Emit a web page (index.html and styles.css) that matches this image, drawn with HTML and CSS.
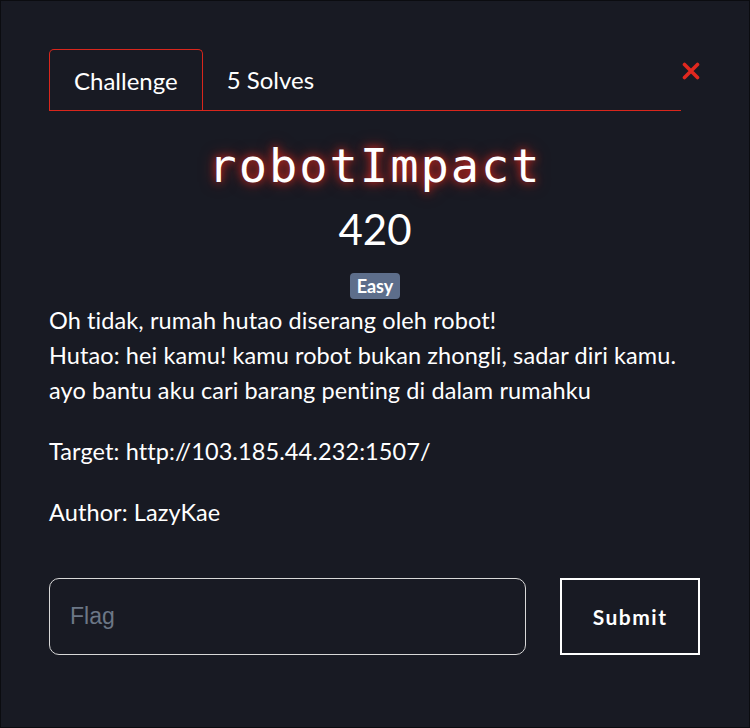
FILE: index.html
```html
<!DOCTYPE html>
<html>
<head>
<meta charset="utf-8">
<link rel="stylesheet" href="styles.css">
</head>
<body>
<div class="modal">
  <div class="tabs">
    <div class="tab active">Challenge</div>
    <div class="tab">5 Solves</div>
  </div>
  <button class="close" aria-label="Close">
    <svg width="18" height="18" viewBox="0 0 18 18"><path d="M2.5 2.5 L15.5 15.5 M15.5 2.5 L2.5 15.5" stroke="#e0281f" stroke-width="3.6" stroke-linecap="round"/></svg>
  </button>
  <h1 class="title">robotImpact</h1>
  <div class="points">420</div>
  <div class="badge-row"><span class="badge">Easy</span></div>
  <div class="desc">
    <p>Oh tidak, rumah hutao diserang oleh robot!<br>Hutao: hei kamu! kamu robot bukan zhongli, sadar diri kamu.<br>ayo bantu aku cari barang penting di dalam rumahku</p>
    <p>Target: http://103.185.44.232:1507/</p>
    <p>Author: LazyKae</p>
  </div>
  <form class="submit-row">
    <input class="flag" type="text" placeholder="Flag">
    <button class="submit" type="button">Submit</button>
  </form>
</div>
</body>
</html>
```
FILE: styles.css
```css
html, body {
  margin: 0;
  padding: 0;
  background: #0d0f14;
}
.modal {
  box-sizing: border-box;
  width: 750px;
  height: 728px;
  background: #181a23;
  border: 1px solid #0b0c10;
  position: relative;
  padding: 48px 49px 0 48px;
  font-family: Lato, "Open Sans", sans-serif;
  color: #ffffff;
}
.tabs {
  display: flex;
  width: 632px;
  border-bottom: 1px solid #d9261c;
  height: 61px;
}
.tab {
  font-size: 24px;
  line-height: 61px;
  padding: 0 24px;
  color: #ffffff;
}
.tab.active {
  border: 1px solid #d9261c;
  border-bottom: none;
  border-radius: 5px 5px 0 0;
  margin-bottom: -1px;
  height: 61px;
}
.close {
  position: absolute;
  top: 61px;
  left: 681px;
  background: none;
  border: none;
  padding: 0;
  width: 18px;
  height: 18px;
}
.close svg { display: block; }
.title {
  margin: 25px 0 0;
  text-align: center;
  font-family: "DejaVu Sans Mono", monospace;
  font-weight: 400;
  font-size: 47px;
  letter-spacing: 2px;
  line-height: 60px;
  text-shadow: 0 0 8px #d9261c, 0 0 16px rgba(217, 38, 28, 0.6);
  width: 652px;
}
.points {
  text-align: center;
  font-size: 42px;
  line-height: 50px;
  margin-top: 8px;
  width: 652px;
}
.badge-row {
  text-align: center;
  width: 652px;
  margin-top: 19px;
  height: 26px;
}
.badge {
  display: inline-block;
  background: #5d6e8b;
  color: #ffffff;
  font-weight: 700;
  font-size: 18px;
  line-height: 26px;
  padding: 0 7px;
  border-radius: 4px;
}
.desc {
  margin-top: 4px;
  font-size: 23.5px;
  letter-spacing: 0.1px;
  line-height: 35px;
}
.desc p {
  margin: 0 0 26px;
}
.submit-row {
  display: flex;
  gap: 34px;
  margin-top: 48px;
}
.flag {
  box-sizing: border-box;
  width: 478px;
  height: 77px;
  background: #181a23;
  border: 1px solid #d8d8d8;
  border-radius: 10px;
  padding: 0 20px;
  font-family: "Liberation Sans", Arial, sans-serif;
  font-size: 23px;
  color: #ffffff;
  outline: none;
}
.flag::placeholder {
  color: #6c7786;
}
.submit {
  box-sizing: border-box;
  width: 140px;
  height: 77px;
  background: transparent;
  border: 2px solid #ffffff;
  border-radius: 0;
  color: #ffffff;
  font-family: Lato, sans-serif;
  font-weight: 700;
  font-size: 21px;
  letter-spacing: 1.5px;
}
```
